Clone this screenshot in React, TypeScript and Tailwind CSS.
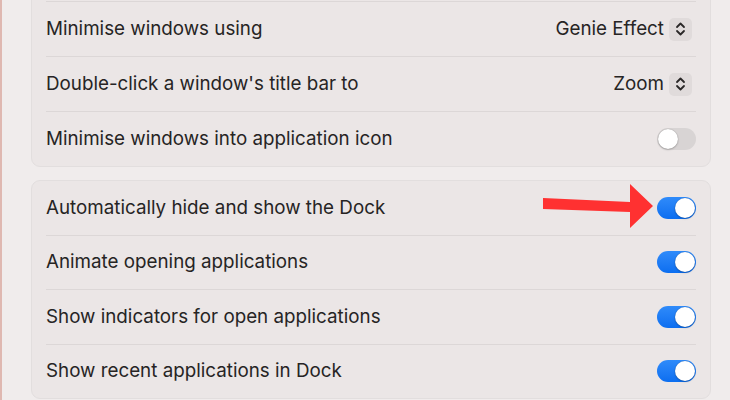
import React from 'react';

type Row = {
  label: string;
  control: 'popup' | 'toggle';
  value?: string;
  on?: boolean;
};

const windowRows: Row[] = [
  { label: 'Minimise windows using', control: 'popup', value: 'Genie Effect' },
  { label: "Double-click a window's title bar to", control: 'popup', value: 'Zoom' },
  { label: 'Minimise windows into application icon', control: 'toggle', on: false },
];

const dockRows: Row[] = [
  { label: 'Automatically hide and show the Dock', control: 'toggle', on: true },
  { label: 'Animate opening applications', control: 'toggle', on: true },
  { label: 'Show indicators for open applications', control: 'toggle', on: true },
  { label: 'Show recent applications in Dock', control: 'toggle', on: true },
];

const Chevrons: React.FC = () => (
  <svg width="11" height="16" viewBox="0 0 11 16" fill="none">
    <path d="M2 6 L5.5 2.5 L9 6" stroke="#2a2828" strokeWidth="1.8" strokeLinecap="round" strokeLinejoin="round" />
    <path d="M2 10 L5.5 13.5 L9 10" stroke="#2a2828" strokeWidth="1.8" strokeLinecap="round" strokeLinejoin="round" />
  </svg>
);

const Popup: React.FC<{ value: string }> = ({ value }) => (
  <div className="mr-[4px] flex items-center gap-[5px]">
    <span>{value}</span>
    <div className="flex h-[23px] w-[23px] items-center justify-center rounded-[5px] bg-[#e0dbdb]">
      <Chevrons />
    </div>
  </div>
);

const Toggle: React.FC<{ on: boolean }> = ({ on }) => (
  <div
    className={
      on
        ? 'flex h-[22px] w-[39px] items-center justify-end rounded-full bg-gradient-to-b from-[#2f8bfa] to-[#0b6ef0] px-[1px]'
        : 'flex h-[22px] w-[39px] items-center justify-start rounded-full bg-[#d8d4d4] px-[1px]'
    }
  >
    <div className="h-[20px] w-[20px] rounded-full bg-white shadow-[0_0_1px_rgba(0,0,0,0.35),0_1px_2px_rgba(0,0,0,0.2)]" />
  </div>
);

// topCut: the card continues above the visible area, so the first row gets a separator too
const Card: React.FC<{ rows: Row[]; tight?: boolean; topCut?: boolean }> = ({ rows, tight, topCut }) => (
  <div className="rounded-b-[9px] rounded-t-[9px] border border-[#e2dede] bg-[#ebe6e6]">
    {topCut && <div className="h-[54px]" />}
    {rows.map((row, i) => (
      <div
        key={row.label}
        className={i === 0 && !topCut ? 'mx-[14px]' : 'mx-[14px] border-t border-[#dcd7d7]'}
      >
        <div className={tight ? 'flex h-[53.5px] items-center justify-between' : 'flex h-[54px] items-center justify-between'}>
          <span>{row.label}</span>
          {row.control === 'popup' ? <Popup value={row.value ?? ''} /> : <Toggle on={!!row.on} />}
        </div>
      </div>
    ))}
  </div>
);

export default function App() {
  return (
    <div className="relative h-[400px] w-[730px] overflow-hidden bg-[#f0ecec] font-['Inter','Noto_Sans',sans-serif] text-[18.8px] text-[#262424]">
      <div className="flex h-full">
        {/* pinkish window edge on the left */}
        <div className="w-[2px] shrink-0 bg-[#dfb8b1]" />
        <div className="ml-[29px] mt-[-54px] flex w-[680px] flex-col gap-[13px]">
          <Card rows={windowRows} topCut />
          <Card rows={dockRows} tight />
        </div>
      </div>

      {/* red annotation arrow */}
      <svg className="pointer-events-none absolute left-0 top-0" width="730" height="400" viewBox="0 0 730 400">
        <polygon
          points="543,198 630,202 630,184 653,206 630,228 630,212 543,209"
          fill="#ff3131"
        />
      </svg>
    </div>
  );
}
